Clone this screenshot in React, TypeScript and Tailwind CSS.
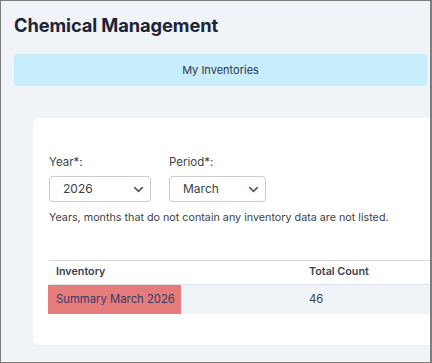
import { ChevronDown } from 'lucide-react';

function SelectBox({ value, width }: { value: string; width: string }) {
    return (
        <div className={`${width} h-[26px] flex items-center justify-between pl-[13px] pr-[4px] bg-white border border-[#c9ccd3] rounded-[4px] text-[12px] text-[#3c3f46]`}>
            <span>{value}</span>
            <ChevronDown size={15} strokeWidth={2.6} className="text-[#55585e]" />
        </div>
    );
}

export default function App() {
    return (
        <div
            className="w-[432px] h-[363px] overflow-hidden bg-[#f0f3f8] border border-[#7d7d7d] border-r-2 pl-[13px] pt-[12px]"
            style={{ fontFamily: 'Inter, "Noto Sans", sans-serif' }}
        >
            <h1 className="text-[18.3px] leading-[24px] font-bold text-[#1c2437] tracking-[-0.1px]">Chemical Management</h1>

            <div className="mt-[17px] mr-[3px] h-[32px] rounded-[3px] bg-[#c8eefd] flex items-center justify-center text-[11px] text-[#2c3445]">
                My Inventories
            </div>

            <div className="mt-[32px] ml-[19px] bg-white rounded-l-[6px] h-[227px] pt-[37px] pl-[16px]">
                <div className="flex gap-[18px]">
                    <div className="flex flex-col gap-[7px]">
                        <label className="text-[11.5px] leading-[14px] text-[#3c3f46]">Year*:</label>
                        <SelectBox value="2026" width="w-[102px]" />
                    </div>
                    <div className="flex flex-col gap-[7px]">
                        <label className="text-[11.5px] leading-[14px] text-[#3c3f46]">Period*:</label>
                        <SelectBox value="March" width="w-[97px]" />
                    </div>
                </div>
                <p className="mt-[9px] text-[10.75px] leading-[14px] text-[#3c3f46]">
                    Years, months that do not contain any inventory data are not listed.
                </p>

                <div className="mt-[35px] border-t border-[#d3d8e3] text-[10.75px]">
                    <div className="flex h-[24px] items-center border-b border-[#dfe3ea] font-semibold text-[#3c4150]">
                        <div className="w-[260px] pl-[7px]">Inventory</div>
                        <div>Total Count</div>
                    </div>
                    <div className="flex h-[29px] items-center bg-[#f0f3f8] text-[11.3px] whitespace-nowrap">
                        <div className="w-[260px] h-full flex">
                            <div className="w-[133px] -ml-px h-full flex items-center pl-[8px] bg-[#e57b7b] text-[#363b6a]">
                                Summary March 2026
                            </div>
                        </div>
                        <div className="text-[#3c3f46]">46</div>
                    </div>
                </div>
            </div>
        </div>
    );
}
